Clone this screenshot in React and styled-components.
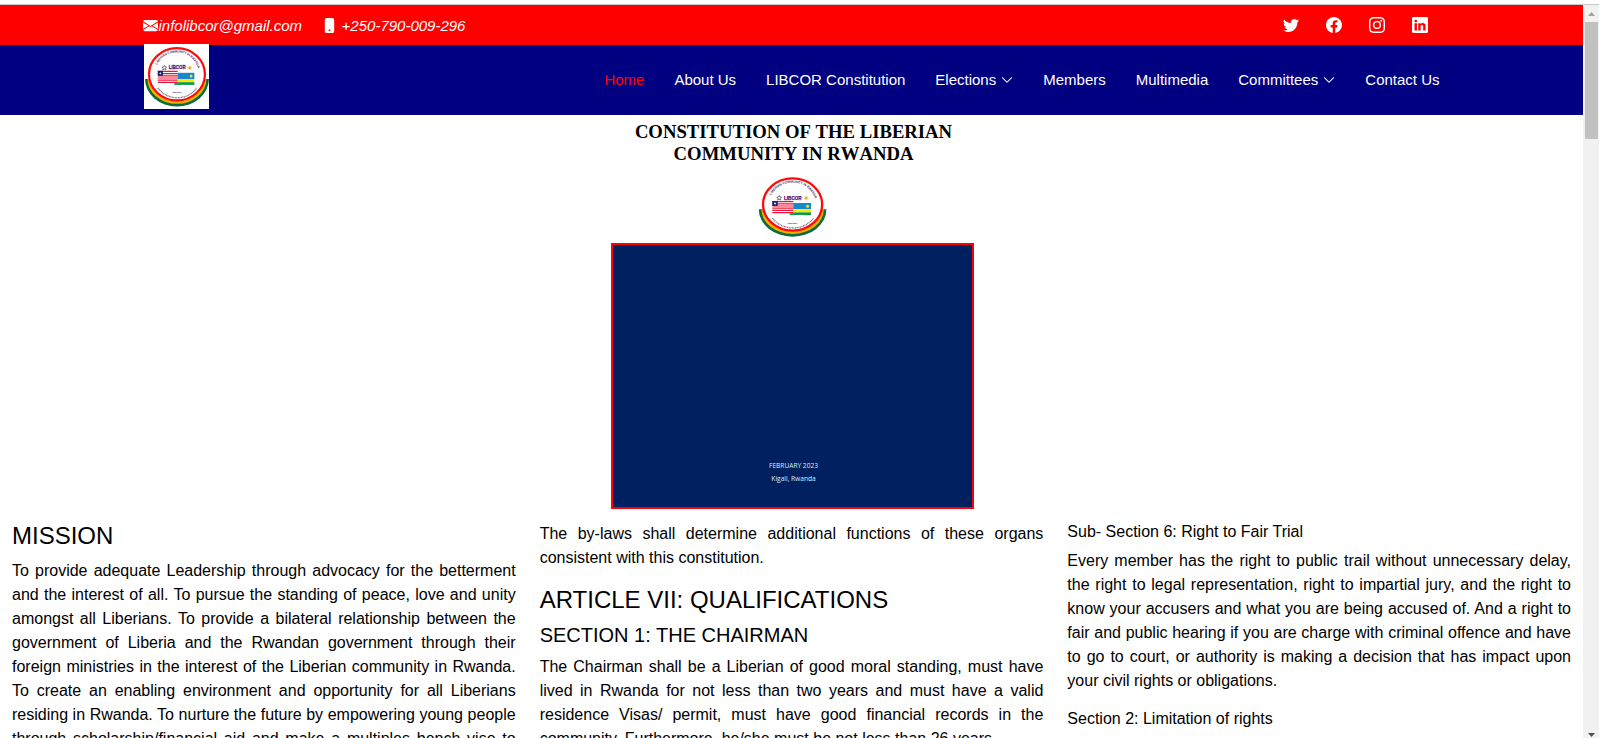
import React from "react";
import styled, { createGlobalStyle } from "styled-components";
import {
  BsEnvelopeFill,
  BsPhoneFill,
  BsTwitter,
  BsFacebook,
  BsInstagram,
  BsLinkedin,
  BsChevronDown,
} from "react-icons/bs";

const GlobalStyle = createGlobalStyle`
  *, *::before, *::after { box-sizing: border-box; }
  html, body { margin: 0; padding: 0; overflow: hidden; background: #fff; }
  body { font-family: "Liberation Sans", Arial, sans-serif; font-size: 16px; line-height: 1.5; color: #000; }
  svg { display: block; flex: none; }
`;

const Window = styled.div`
  display: flex;
  height: 738px;
  margin: 0;
  padding-top: 4px;
  overflow: hidden;
  flex-direction: column;
`;

const Viewport = styled.div`
  display: flex;
  flex: 1;
  min-height: 0;
  border-top: 1px solid #c8c8c8;
`;

const Page = styled.div`
  flex: 1;
  min-width: 0;
  overflow: hidden;
`;

const Container = styled.div`
  width: 1320px;
  height: 100%;
  margin: 0 auto;
  padding: 0 12px;
  display: flex;
  align-items: ${(p) => p.$align || "center"};
  justify-content: space-between;
`;

const TopBar = styled.div`
  height: 40px;
  background: #ff0000;
  color: #fff;
`;

const Contact = styled.div`
  display: flex;
  align-items: center;
  font-size: 15px;
  font-style: italic;
  line-height: 20px;
  padding-top: 1px;
  margin-left: -0.5px;
`;

const Email = styled.span`
  margin-left: 0.5px;
`;

const Phone = styled.span`
  display: flex;
  align-items: center;
  gap: 5px;
  margin-left: 19.5px;
`;

const Social = styled.div`
  display: flex;
  gap: 27px;
  padding: 0 11.5px 1px 0;
`;

const Header = styled.header`
  height: 70px;
  background: #000080;
`;

const LogoBox = styled.div`
  width: 65px;
  height: 65px;
  margin-top: -1px;
  margin-left: 0.5px;
  background: #fff;
`;

const Nav = styled.nav`
  display: flex;
  gap: 30px;
  padding-top: 24px;
`;

const NavItem = styled.a`
  display: flex;
  align-items: center;
  gap: 5px;
  height: 22px;
  font-size: 15px;
  white-space: nowrap;
  color: ${(p) => (p.$active ? "#ff0000" : "#fff")};

  svg {
    stroke: currentColor;
    stroke-width: 0.5px;
  }
`;

const Cover = styled.section`
  display: flex;
  flex-direction: column;
  align-items: center;
  height: 406.95px;
  padding: 6px 0 0 2px;
`;

const CoverTitle = styled.h1`
  margin: 0 0 0 2px;
  height: 56px;
  font: bold 18.7px/22.3px "Liberation Serif", "Times New Roman", serif;
  font-kerning: none;
  text-align: center;
  white-space: nowrap;
`;

const CoverPanel = styled.div`
  display: flex;
  flex-direction: column;
  align-items: center;
  justify-content: flex-end;
  width: 363px;
  height: 266px;
  margin-top: 4px;
  padding: 0 0 22px 2px;
  border: 2px solid #f8000c;
  background: #002060;
  color: #dcecf4;
  font: 6.6px/13px "Open Sans", sans-serif;
  white-space: nowrap;
`;

const Columns = styled.main`
  display: grid;
  grid-template-columns: repeat(3, 1fr);
`;

const Column = styled.article`
  padding: 0 12px;
  min-width: 0;
`;

const Heading = styled.h2`
  margin: 0 0 8px;
  font-size: ${(p) => p.$size}px;
  font-weight: 400;
  line-height: 1.2;
`;

const Paragraph = styled.p`
  margin: 0 0 16px;
  text-align: justify;
  text-align-last: ${(p) => (p.$continues ? "justify" : "auto")};
`;

const ScrollTrack = styled.div`
  width: 16px;
  background: #f1f1f1;
  display: flex;
  flex-direction: column;
  align-items: center;
  padding-top: 7px;
`;

const ScrollThumb = styled.div`
  width: 13px;
  height: 117px;
  margin: 6px 0 594px 1px;
  background: #c1c1c1;
  flex: none;
`;

const Arrow = styled.svg`
  width: 7px;
  height: 4px;
  margin-left: 1px;
  fill: ${(p) => p.$color};
`;

function Emblem({ id, width, height, viewBox }) {
  return (
    <svg width={width} height={height} viewBox={viewBox} preserveAspectRatio="none">
      <defs>
        <path id={id} d="M12.6 21 A23.2 21.5 0 0 1 57 23 L59 30" />
      </defs>
      <path d="M.8 33.3 A33.8 27.4 0 0 0 68.4 33.3 Z" fill="#0b6b3c" />
      <path d="M3.4 33.3 A31.2 24.7 0 0 0 65.8 33.3 Z" fill="#f2b100" />
      <ellipse cx="34.6" cy="28.5" rx="29.6" ry="26.1" fill="#fff" stroke="#ff0a0a" strokeWidth="2.3" />
      <text fontFamily="Liberation Sans" fontSize="3.3" fontWeight="bold" fill="#56306e">
        <textPath href={`#${id}`} startOffset="2" textLength="55">LIBERIAN COMMUNITY IN RWANDA</textPath>
      </text>
      <path d="M14.5 42.2 A24.3 21 0 0 0 55.5 42.2" fill="none" stroke="#79658c" strokeWidth="1.3" strokeDasharray="1 .6" />
      <path d="M21.2 19.6l.75 1.5 1.65.1-1.2 1.2.4 1.7-1.6-.8-1.6.8.4-1.7-1.2-1.2 1.65-.1z" fill="#fff" stroke="#343b7a" strokeWidth=".7" />
      <text x="26" y="23.7" fontFamily="Liberation Sans" fontSize="5" fontWeight="bold" fill="#4b0f70" stroke="#4b0f70" strokeWidth=".25" textLength="17.7" lengthAdjust="spacingAndGlyphs">LIBCOR</text>
      <circle cx="48.2" cy="22" r="1.5" fill="#eda62f" />
      <circle cx="48.2" cy="22" r="2" fill="none" stroke="#f3c377" strokeWidth=".7" strokeDasharray=".6 .5" />
      <path d="M31.7 27h21.3v6.2H31.7z" fill="#1788c9" />
      <path d="M31.7 33.2h21.3v3.2H31.7z" fill="#ffe600" />
      <path d="M31.7 36.4h21.3v2.7H31.7z" fill="#0c9a48" />
      <circle cx="49.6" cy="30.3" r="1.5" fill="#e8e04c" />
      <path d="M14.3 25h21v12.3h-21z" fill="#fff" />
      <path d="M14.3 25.6h21M14.3 27.8h21M14.3 30h21M14.3 32.2h21M14.3 34.4h21M14.3 36.6h21" stroke="#ee1438" strokeWidth="1.2" />
      <path d="M14.3 25h5.4v5h-5.4z" fill="#10256e" />
      <circle cx="17" cy="27.5" r=".9" fill="#fff" />
      <text x="29.8" y="47.7" fontFamily="Liberation Sans" fontSize="2.4" fontWeight="bold" fill="#4b0f70" textLength="10">RWANDA</text>
    </svg>
  );
}

const navItems = [
  { label: "Home", active: true },
  { label: "About Us" },
  { label: "LIBCOR Constitution" },
  { label: "Elections", menu: true },
  { label: "Members" },
  { label: "Multimedia" },
  { label: "Committees", menu: true },
  { label: "Contact Us" },
];

export default function App() {
  return (
    <Window>
      <GlobalStyle />
      <Viewport>
        <Page>
          <TopBar>
            <Container>
              <Contact>
                <BsEnvelopeFill size={15} />
                <Email>infolibcor@gmail.com</Email>
                <Phone>
                  <BsPhoneFill size={15} />
                  +250-790-009-296
                </Phone>
              </Contact>
              <Social>
                <BsTwitter size={16} />
                <BsFacebook size={16} />
                <BsInstagram size={16} />
                <BsLinkedin size={16} />
              </Social>
            </Container>
          </TopBar>
          <Header>
            <Container $align="flex-start">
              <LogoBox>
                <Emblem id="arc-header" width="65" height="65" viewBox="-0.3 -1.8 68.8 65" />
              </LogoBox>
              <Nav>
                {navItems.map((item) => (
                  <NavItem key={item.label} $active={item.active}>
                    {item.label}
                    {item.menu && <BsChevronDown size={12} />}
                  </NavItem>
                ))}
              </Nav>
            </Container>
          </Header>
          <Cover>
            <CoverTitle>
              CONSTITUTION OF THE LIBERIAN
              <br />
              COMMUNITY IN RWANDA
            </CoverTitle>
            <Emblem id="arc-cover" width="69" height="62" viewBox="0 1 69 62" />
            <CoverPanel>
              <span>FEBRUARY 2023</span>
              <span>Kigali, Rwanda</span>
            </CoverPanel>
          </Cover>
          <Columns>
            <Column>
              <Heading $size={24}>MISSION</Heading>
              <Paragraph $continues>
                To provide adequate Leadership through advocacy for the betterment and the interest of
                all. To pursue the standing of peace, love and unity amongst all Liberians. To provide a
                bilateral relationship between the government of Liberia and the Rwandan government
                through their foreign ministries in the interest of the Liberian community in Rwanda. To
                create an enabling environment and opportunity for all Liberians residing in Rwanda. To
                nurture the future by empowering young people through scholarship/financial aid and make
                a multiples bench vise to
              </Paragraph>
            </Column>
            <Column>
              <Paragraph>
                The by-laws shall determine additional functions of these organs consistent with this
                constitution.
              </Paragraph>
              <Heading $size={24}>ARTICLE VII: QUALIFICATIONS</Heading>
              <Heading as="h3" $size={20}>SECTION 1: THE CHAIRMAN</Heading>
              <Paragraph>
                The Chairman shall be a Liberian of good moral standing, must have lived in Rwanda for
                not less than two years and must have a valid residence Visas/ permit, must have good
                financial records in the community. Furthermore, he/she must be not less than 26 years.
              </Paragraph>
            </Column>
            <Column>
              <Heading as="h4" $size={16}>Sub- Section 6: Right to Fair Trial</Heading>
              <Paragraph>
                Every member has the right to public trail without unnecessary delay, the right to legal
                representation, right to impartial jury, and the right to know your accusers and what you
                are being accused of. And a right to fair and public hearing if you are charge with
                criminal offence and have to go to court, or authority is making a decision that has
                impact upon your civil rights or obligations.
              </Paragraph>
              <Heading as="h4" $size={16}>Section 2: Limitation of rights</Heading>
            </Column>
          </Columns>
        </Page>
        <ScrollTrack>
          <Arrow $color="#a3a3a3" viewBox="0 0 7 4">
            <path d="M3.5 0L7 4H0z" />
          </Arrow>
          <ScrollThumb />
          <Arrow $color="#505050" viewBox="0 0 7 4">
            <path d="M0 0h7L3.5 4z" />
          </Arrow>
        </ScrollTrack>
      </Viewport>
    </Window>
  );
}
